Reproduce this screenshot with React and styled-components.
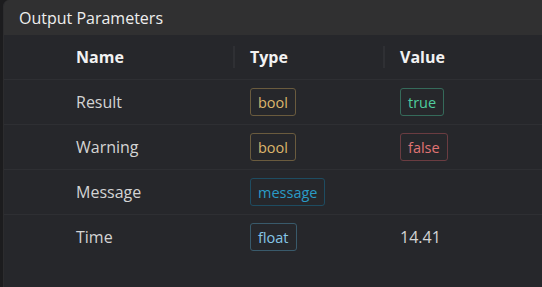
import React from "react";
import styled, { createGlobalStyle } from "styled-components";

const Global = createGlobalStyle`
  html, body { margin: 0; padding: 0; background: #1c1c1e; }
  body { font-family: "Open Sans", "Noto Sans", sans-serif; }
`;

const Page = styled.div`
  height: 287px;
  padding-left: 3px;
  display: flex;
  box-sizing: border-box;
`;

const Panel = styled.section`
  flex: 1;
  display: flex;
  flex-direction: column;
  background: #26272b;
  border-left: 1px solid #2c2c2e;
  border-top-left-radius: 6px;
  overflow: hidden;
`;

const Title = styled.header`
  height: 35px;
  display: flex;
  align-items: center;
  padding-left: 15px;
  background: #303031;
  color: #eeeeee;
  font-size: 16px;
`;

const Table = styled.div`
  display: flex;
  flex-direction: column;
`;

const Row = styled.div`
  display: grid;
  grid-template-columns: 174px 150px 1fr;
  height: 44px;
  align-items: center;
  border-bottom: ${(p) => (p.$last ? "none" : "1px solid #2e2f33")};
  padding-left: 56px;
`;

const HeadCell = styled.div`
  position: relative;
  padding-left: 16px;
  color: #f2f2f2;
  font-weight: 700;
  font-size: 16px;
  &::before {
    content: "";
    display: ${(p) => (p.$sep ? "block" : "none")};
    position: absolute;
    left: -1px;
    top: 50%;
    margin-top: -11px;
    width: 2px;
    height: 22px;
    background: #2f3034;
  }
`;

const Cell = styled.div`
  padding-left: 16px;
  color: #d4d4d4;
  font-size: 16px;
  display: flex;
  align-items: center;
`;

const tones = {
  gold: { fg: "#dcb56b", bd: "#6a5b3e" },
  green: { fg: "#4fcd9e", bd: "#356a5a" },
  red: { fg: "#e07474", bd: "#6a3c41" },
  teal: { fg: "#2a9bc6", bd: "#1e4c61" },
  sky: { fg: "#85c6e6", bd: "#395a6b" },
};

const Badge = styled.span`
  display: inline-flex;
  align-items: center;
  height: 26px;
  padding: 0 7px;
  border: 1px solid ${(p) => tones[p.$tone].bd};
  border-radius: 3px;
  color: ${(p) => tones[p.$tone].fg};
  font-size: 14.5px;
`;

const rows = [
  { name: "Result", type: ["bool", "gold"], value: { badge: ["true", "green"] } },
  { name: "Warning", type: ["bool", "gold"], value: { badge: ["false", "red"] } },
  { name: "Message", type: ["message", "teal"], value: null },
  { name: "Time", type: ["float", "sky"], value: { text: "14.41" } },
];

export default function App() {
  return (
    <>
      <Global />
      <Page>
        <Panel>
          <Title>Output Parameters</Title>
          <Table>
            <Row>
              <HeadCell>Name</HeadCell>
              <HeadCell $sep>Type</HeadCell>
              <HeadCell $sep>Value</HeadCell>
            </Row>
            {rows.map((r, i) => (
              <Row key={r.name} $last={i === rows.length - 1}>
                <Cell>{r.name}</Cell>
                <Cell>
                  <Badge $tone={r.type[1]}>{r.type[0]}</Badge>
                </Cell>
                <Cell>
                  {r.value && r.value.badge && (
                    <Badge $tone={r.value.badge[1]}>{r.value.badge[0]}</Badge>
                  )}
                  {r.value && r.value.text}
                </Cell>
              </Row>
            ))}
          </Table>
        </Panel>
      </Page>
    </>
  );
}
